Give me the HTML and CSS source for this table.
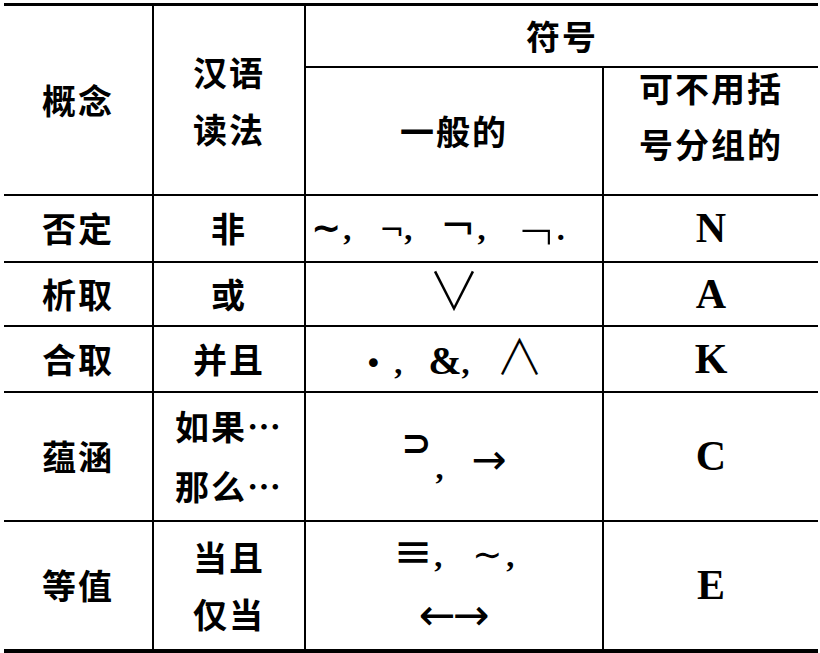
FILE: index.html
```html
<!DOCTYPE html>
<html lang="zh">
<head>
<meta charset="utf-8">
<title>逻辑联结词符号</title>
<link rel="stylesheet" href="styles.css">
</head>
<body>
<table class="logic">
  <colgroup>
    <col class="c1"><col class="c2"><col class="c3"><col class="c4">
  </colgroup>
  <tr class="h1">
    <th rowspan="2" class="cjk">概念</th>
    <th rowspan="2" class="cjk two">汉语<br>读法</th>
    <th colspan="2" class="cjk">符号</th>
  </tr>
  <tr class="h2">
    <th class="cjk">一般的</th>
    <th class="cjk two top"><div class="lift">可不用括<br>号分组的</div></th>
  </tr>
  <tr class="r1">
    <td class="cjk">否定</td>
    <td class="cjk">非</td>
    <td class="sym left"><span class="op tilde bold">∼</span><span class="cm">,</span><span class="op neg-s">¬</span><span class="cm">,</span><span class="op neg-l">¬</span><span class="cm tight">,</span><span class="op neg-t">¬</span><span class="dot">.</span></td>
    <td class="let">N</td>
  </tr>
  <tr class="r2">
    <td class="cjk">析取</td>
    <td class="cjk">或</td>
    <td class="sym"><span class="op vee">∨</span></td>
    <td class="let">A</td>
  </tr>
  <tr class="r3">
    <td class="cjk">合取</td>
    <td class="cjk">并且</td>
    <td class="sym"><span class="op bullet">•</span><span class="cm">,</span><span class="op amp">&amp;</span><span class="cm">,</span><span class="op vee wedge">∧</span></td>
    <td class="let">K</td>
  </tr>
  <tr class="r4">
    <td class="cjk">蕴涵</td>
    <td class="cjk two wide">如果…<br>那么…</td>
    <td class="sym"><span class="op sup">⊃</span><span class="cm">,</span><span class="op arrow">→</span></td>
    <td class="let">C</td>
  </tr>
  <tr class="r5">
    <td class="cjk">等值</td>
    <td class="cjk two">当且<br>仅当</td>
    <td class="sym"><div class="symline"><span class="op equiv">≡</span><span class="cm">,</span><span class="op tilde">∼</span><span class="cm last">,</span></div><div class="symline"><span class="op larr">←</span><span class="op rarr">→</span></div></td>
    <td class="let">E</td>
  </tr>
</table>
</body>
</html>
```

FILE: styles.css
```css
html, body {
  margin: 0;
  padding: 0;
  background: #ffffff;
}

body {
  color: #000000;
  font-family: "Noto Sans CJK SC", "Noto Sans", sans-serif;
}

.logic {
  border-collapse: collapse;
  table-layout: fixed;
  width: 814px;
  margin: 3px 0 0 4px;
  border-top: 3px solid #000;
  border-bottom: 5px solid #000;
}

.c1 { width: 149px; }
.c2 { width: 152px; }
.c3 { width: 298px; }
.c4 { width: 215px; }

.logic th,
.logic td {
  border: 2px solid #000;
  padding: 0;
  text-align: center;
  vertical-align: middle;
  font-weight: normal;
  overflow: visible;
}

.logic tr > :first-child { border-left: none; }
.logic tr > :last-child { border-right: none; }
.logic .h2 > :first-child { border-left: 2px solid #000; }

.h1 { height: 62px; }
.h2 { height: 128px; }
.r1 { height: 67px; }
.r2 { height: 64px; }
.r3 { height: 66px; }
.r4 { height: 129px; }
.r5 { height: 129px; }

.logic .cjk {
  font-family: "Noto Sans CJK SC", sans-serif;
  font-size: 34px;
  font-weight: 700;
  letter-spacing: 2px;
  line-height: 40px;
}

.logic .two { line-height: 57px; }
.logic .two.wide { line-height: 60px; }

.logic .top { vertical-align: top; }
.lift {
  line-height: 56px;
  margin-top: -8px;
}

.logic .let {
  font-family: "Liberation Serif", serif;
  font-weight: bold;
  font-size: 42px;
  line-height: 44px;
}

.logic .sym {
  font-family: "DejaVu Sans", sans-serif;
  font-size: 30px;
  line-height: 40px;
  white-space: nowrap;
}

.logic .sym.left {
  text-align: left;
  padding-left: 5px;
}

.symline {
  line-height: 58px;
}

.cm {
  font-family: "Liberation Serif", serif;
  font-weight: bold;
  font-size: 32px;
  margin-right: 28px;
}
.cm.tight { margin-right: 30px; }
.cm.last { margin-right: 0; }

.op { display: inline-block; }

.tilde { font-size: 36px; margin-right: 4px; }
.tilde.bold { font-weight: bold; margin-right: 2px; }
.neg-s { font-size: 30px; }
.neg-l { font-size: 42px; margin-right: 2px; }
.neg-t {
  font-size: 30px;
  font-weight: 200;
  margin: 0 8px;
  transform: scale(1.5, 1.9);
  transform-origin: 50% 40%;
}
.dot {
  font-family: "Liberation Serif", serif;
  font-weight: bold;
  font-size: 32px;
}

.vee {
  font-family: "Noto Sans CJK JP", sans-serif;
  font-size: 52px;
  font-weight: 300;
}

.r3 .cm { margin-right: 26px; }
.r3 .cm:first-of-type { margin-right: 30px; }
.bullet { font-size: 30px; margin-right: 12px; }
.wedge { font-size: 48px; }

.amp {
  font-family: "Liberation Serif", serif;
  font-weight: bold;
  font-size: 40px;
}

.sup {
  font-size: 36px;
  font-weight: bold;
  vertical-align: 24px;
  margin-right: 4px;
}

.arrow { font-size: 42px; vertical-align: 5px; }
.equiv { font-size: 46px; margin-right: 2px; }
.r5 .cm { margin-right: 30px; }
.r5 .cm.last { margin-right: 0; }
.larr, .rarr { font-size: 44px; }
.rarr { margin-left: -3px; }
```
